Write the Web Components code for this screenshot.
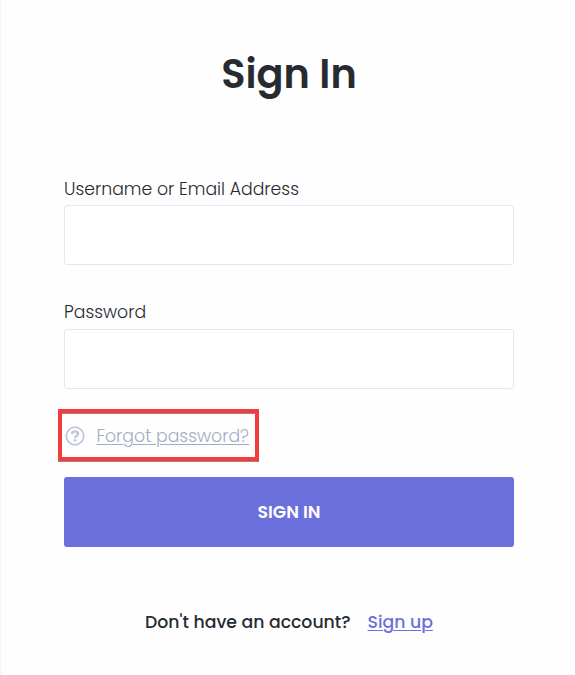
<!DOCTYPE html>
<html lang="en">
<head>
  <meta charset="utf-8">
  <title>Sign In</title>
  <style>
    body {
      margin: 0;
      background: #fefefe;
      color: #262b32;
      font-family: Poppins, Inter, "Open Sans", sans-serif;
    }
  </style>
</head>
<body>
  <sign-in-form>
    <form-title slot="title">Sign In</form-title>
    <text-field label="Username or Email Address" type="text"></text-field>
    <text-field label="Password" type="password"></text-field>
    <forgot-link>Forgot password?</forgot-link>
    <submit-button>SIGN IN</submit-button>
    <sign-up-prompt slot="footer">
      Don't have an account?
      <span slot="action">Sign up</span>
    </sign-up-prompt>
  </sign-in-form>

  <script>
    class SignInForm extends HTMLElement {
      constructor() {
        super();
        this.attachShadow({ mode: "open" }).innerHTML = `
          <style>
            :host {
              display: block;
              box-sizing: border-box;
              height: 675px;
              padding: 44px 61px 0 63px;
              border-left: 1px solid #f4f4f5;
              overflow: hidden;
            }
            form {
              display: flex;
              flex-direction: column;
              margin-top: 71px;
            }
          </style>
          <slot name="title"></slot>
          <form><slot></slot></form>
          <slot name="footer"></slot>
        `;
      }
    }

    class FormTitle extends HTMLElement {
      constructor() {
        super();
        this.attachShadow({ mode: "open" }).innerHTML = `
          <style>
            :host {
              display: block;
            }
            h1 {
              margin: 0;
              font-size: 39.8px;
              font-weight: 600;
              line-height: 60px;
              text-align: center;
            }
          </style>
          <h1><slot></slot></h1>
        `;
      }
    }

    class TextField extends HTMLElement {
      constructor() {
        super();
        this.attachShadow({ mode: "open" });
      }

      connectedCallback() {
        this.shadowRoot.innerHTML = `
          <style>
            :host {
              display: flex;
              flex-direction: column;
              justify-content: space-between;
              height: 90px;
              margin-bottom: 33px;
            }
            :host([type="password"]) {
              height: 91px;
              margin-bottom: 34px;
            }
            label {
              font-size: 17.3px;
              font-weight: 300;
              line-height: 28px;
              white-space: nowrap;
            }
            input {
              display: block;
              box-sizing: border-box;
              width: 100%;
              height: 60px;
              padding: 0 20px;
              border: 1px solid #e2e8f3;
              border-radius: 3px;
              background: #fff;
              font: inherit;
              outline: none;
            }
          </style>
          <label for="field">${this.getAttribute("label")}</label>
          <input id="field" type="${this.getAttribute("type")}">
        `;
      }
    }

    class ForgotLink extends HTMLElement {
      constructor() {
        super();
        this.attachShadow({ mode: "open" }).innerHTML = `
          <style>
            :host {
              display: flex;
              align-items: center;
              box-sizing: border-box;
              width: 201px;
              height: 52px;
              margin: -14px 0 16px -6px;
              padding: 1px 0 0 3px;
              border: 4px solid #f43c3d;
              box-shadow: 0 1px #a27f80, inset 0 1px #a27f80;
              color: #a3adc2;
            }
            svg {
              flex: none;
              width: 20px;
              height: 20px;
              margin-right: 11.5px;
            }
            a {
              font-size: 17.3px;
              font-weight: 300;
              text-decoration: underline;
              text-decoration-thickness: 1px;
              text-underline-offset: 2px;
              white-space: nowrap;
            }
          </style>
          <svg viewBox="0 0 20 20" fill="none" stroke="#bdc6db" aria-hidden="true">
            <circle cx="10" cy="10" r="8.8" stroke-width="1.7"/>
            <path d="M6.9 8C7.1 6.2 8.3 5.4 10 5.4c1.8 0 3 1 3 2.500 0 2.100-2.900 2-2.900 4" stroke-width="2.400"/>
            <circle cx="10.100" cy="14.300" r="1.400" fill="#bdc6db" stroke="none"/>
          </svg>
          <a><slot></slot></a>
        `;
      }
    }

    class SubmitButton extends HTMLElement {
      constructor() {
        super();
        this.attachShadow({ mode: "open" }).innerHTML = `
          <style>
            :host {
              display: block;
            }
            button {
              display: block;
              width: 100%;
              height: 70px;
              padding: 0;
              border: 0;
              border-radius: 3px;
              background: #6c70dc;
              color: #fff;
              font-family: inherit;
              font-size: 17.3px;
              font-weight: 600;
            }
          </style>
          <button type="button"><slot></slot></button>
        `;
      }
    }

    class SignUpPrompt extends HTMLElement {
      constructor() {
        super();
        this.attachShadow({ mode: "open" }).innerHTML = `
          <style>
            :host {
              display: flex;
              justify-content: center;
              gap: 17px;
              margin-top: 61px;
              font-size: 17.3px;
              font-weight: 500;
              line-height: 28px;
              white-space: nowrap;
            }
            a {
              color: #6c70dc;
              text-decoration: underline;
              text-decoration-thickness: 1px;
              text-underline-offset: 2px;
            }
          </style>
          <span><slot></slot></span>
          <a><slot name="action"></slot></a>
        `;
      }
    }

    customElements.define("sign-in-form", SignInForm);
    customElements.define("form-title", FormTitle);
    customElements.define("text-field", TextField);
    customElements.define("forgot-link", ForgotLink);
    customElements.define("submit-button", SubmitButton);
    customElements.define("sign-up-prompt", SignUpPrompt);
  </script>
</body>
</html>
